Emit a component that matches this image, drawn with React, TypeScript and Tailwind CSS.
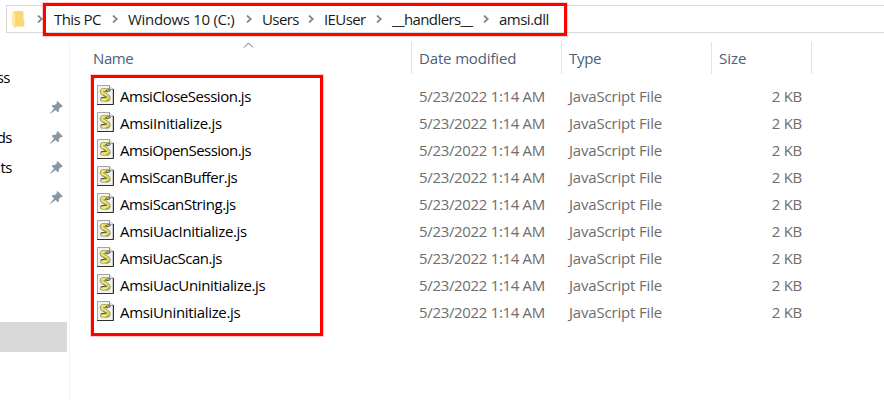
import type { ReactNode } from "react";

const crumbs = [
  { label: "This PC", box: "w-[49px]", gap: "w-[25px]", track: "tracking-[-0.55px]" },
  { label: "Windows 10 (C:)", box: "w-[109px]", gap: "w-[25px]", track: "tracking-[-0.3px]" },
  { label: "Users", box: "w-[37px]", gap: "w-[25px]", track: "tracking-[-0.6px]" },
  { label: "IEUser", box: "w-[43px]", gap: "w-[25px]", track: "tracking-[-0.6px]" },
  { label: "__handlers__", box: "w-[82px]", gap: "w-[25px]", track: "tracking-[-0.6px]" },
  { label: "amsi.dll", box: "w-[60px]", gap: "", track: "tracking-[-0.5px]" },
];

const files = [
  { name: "AmsiCloseSession.js", track: "tracking-[-0.48px]" },
  { name: "AmsiInitialize.js", track: "tracking-[-0.3px]" },
  { name: "AmsiOpenSession.js", track: "tracking-[-0.53px]" },
  { name: "AmsiScanBuffer.js", track: "tracking-[-0.5px]" },
  { name: "AmsiScanString.js", track: "tracking-[-0.42px]" },
  { name: "AmsiUacInitialize.js", track: "tracking-[-0.32px]" },
  { name: "AmsiUacScan.js", track: "tracking-[-0.47px]" },
  { name: "AmsiUacUninitialize.js", track: "tracking-[-0.35px]" },
  { name: "AmsiUninitialize.js", track: "tracking-[-0.33px]" },
];

function Chevron() {
  return (
    <svg className="h-2 w-[7px] shrink-0" viewBox="0 0 7 8" fill="none" stroke="#858585" strokeWidth="1.7">
      <path d="M1 .5 4.8 4 1 7.5" />
    </svg>
  );
}

function Folder() {
  return (
    <svg className="h-[17px] w-[13px] shrink-0" viewBox="0 0 13 17">
      <path d="M2 0H10.5Q11.5 0 11.5 1V8L12.3 9V15.5H2Z" fill="#f8d775" />
      <path d="M0 .5 3.8 3V17L0 14.8Z" fill="#ffe8a2" />
      <path d="M3.8 3V17" stroke="#f0cb67" strokeWidth=".7" />
    </svg>
  );
}

function Pin() {
  return (
    <svg className="h-[13px] w-[13px]" viewBox="0 0 13 13" fill="#8997a3">
      <path d="M7.5 0 12.8 5.2 11.6 6.2 10.9 5.9 8.8 8.2 8.9 10.4 7.9 11.2 5.6 9 .5 12.8 0 12.4 4 7.4 1.7 5 2.5 4 4.9 4.1 7 2 6.6 1Z" />
    </svg>
  );
}

function ScriptIcon() {
  return (
    <svg className="block h-5 w-[17px] shrink-0" viewBox="0 0 17 20">
      <path d="M.5 .5H12.5L16 4V19.5H.5Z" fill="#f3f3f3" stroke="#a5a5a5" />
      <path d="M12.5 .5V4.2H16.2" fill="#fff" stroke="#777" strokeWidth=".8" />
      <path d="M16.5 4V19.5H0" fill="none" stroke="#303030" />
      <g fill="none" strokeLinecap="round" strokeLinejoin="round">
        <path d="M11.5 5H6Q3.6 6.2 5.6 8.2L10.4 10.9Q12.8 13.4 10.4 14.6H5" stroke="#84865c" strokeWidth="4" />
        <path d="M11.2 5H6Q3.8 6.2 5.6 8.2L10.4 10.9Q12.6 13.4 10.4 14.5H5" stroke="#e2dc5c" strokeWidth="2.8" />
        <path d="M8.6 6.2Q10 3.9 13 5.1L10 6.9M4.2 12.9 8.4 12.3" stroke="#4c504c" strokeWidth="1.1" />
        <path d="M10.5 5.3H12" stroke="#c9ccc4" strokeWidth=".9" />
        <path d="M6.5 9.8 10 11.6M12.6 13.7Q11.6 16 9 15.9" stroke="#8c8d3c" strokeWidth=".7" />
        <path d="M5 5.8 6.5 4.7M6.2 8.2 9.6 10.3M5 14.3H9" stroke="#f8f6a4" strokeWidth=".9" />
      </g>
    </svg>
  );
}

function HeaderCell({ children, className }: { children?: ReactNode; className: string }) {
  return (
    <div className={`flex h-8 items-center border-r border-[#e2e2e2] text-[#4c607a] ${className}`}>
      {children}
    </div>
  );
}

function SideRow({ text, textBox = "w-3", pinned }: { text?: string; textBox?: string; pinned?: boolean }) {
  return (
    <div className="flex h-[30px] items-center">
      <span className="flex w-[50px] shrink-0 tracking-[-0.5px]">
        <span className={`flex justify-end ${textBox}`}>{text}</span>
      </span>
      {pinned && <Pin />}
    </div>
  );
}

export default function App() {
  return (
    <div className="relative flex h-[400px] w-[884px] flex-col overflow-hidden bg-white font-['Open_Sans','Noto_Sans',sans-serif] text-[15px] leading-5 whitespace-nowrap text-black">
      <div className="mt-[5px] ml-[6px] flex h-7 shrink-0 items-center border border-r-0 border-[#d9d9d9] pl-[5px]">
        <Folder />
        <div className="flex w-[29px] justify-center pl-px">
          <Chevron />
        </div>
        {crumbs.map((c) => (
          <div key={c.label} className="flex items-center">
            <span className={`${c.box} ${c.track} -mt-px text-[#1a1a1a]`}>{c.label}</span>
            {c.gap && (
              <span className={`${c.gap} flex pl-[9px]`}>
                <Chevron />
              </span>
            )}
          </div>
        ))}
      </div>

      <div className="mt-[9px] flex flex-1">
        <aside className="w-[70px] shrink-0 border-r border-[#f2f2f2] pt-5">
          <SideRow text="ss" textBox="w-[10px]" />
          <SideRow pinned />
          <SideRow text="ds" pinned />
          <SideRow text="ts" pinned />
          <SideRow pinned />
          <div className="mt-[110px] h-[30px] w-[67px] bg-[#d9d9d9]" />
        </aside>

        <main className="flex-1">
          <div className="flex">
            <HeaderCell className="w-[342px] pl-[23px] tracking-[-0.4px]">Name</HeaderCell>
            <HeaderCell className="w-[150px] pl-[7px] tracking-[-0.15px]">Date modified</HeaderCell>
            <HeaderCell className="w-[150px] pl-[7px] tracking-[-0.3px]">Type</HeaderCell>
            <HeaderCell className="w-[100px] pl-[7px]">Size</HeaderCell>
          </div>
          <div className="pt-2">
            {files.map((f) => (
              <div key={f.name} className="flex h-[27px] items-center text-[#6d6d6d]">
                <div className="flex w-[349px] items-center gap-[6px] pl-[27px] text-black">
                  <span className="-mt-[2px]">
                    <ScriptIcon />
                  </span>
                  <span className={f.track}>{f.name}</span>
                </div>
                <span className="w-[150px] tracking-[-0.33px]">5/23/2022 1:14 AM</span>
                <span className="w-[150px] tracking-[-0.18px]">JavaScript File</span>
                <span className="w-[83px] text-right tracking-[-0.3px]">2 KB</span>
              </div>
            ))}
          </div>
        </main>
      </div>

      <svg className="absolute top-[42px] left-[243px] h-[6px] w-[11px]" viewBox="0 0 11 6" fill="none" stroke="#6b6b6b">
        <path d="M1 5.5 5.5 1 10 5.5" />
      </svg>
      <div className="absolute top-[3px] left-[43px] h-[33px] w-[524px] border-3 border-[#ff0000] outline-1 outline-[#ff0000]/20" />
      <div className="absolute top-[75px] left-[91px] h-[261px] w-[232px] border-3 border-[#ff0000] outline-1 outline-[#ff0000]/20" />
    </div>
  );
}
